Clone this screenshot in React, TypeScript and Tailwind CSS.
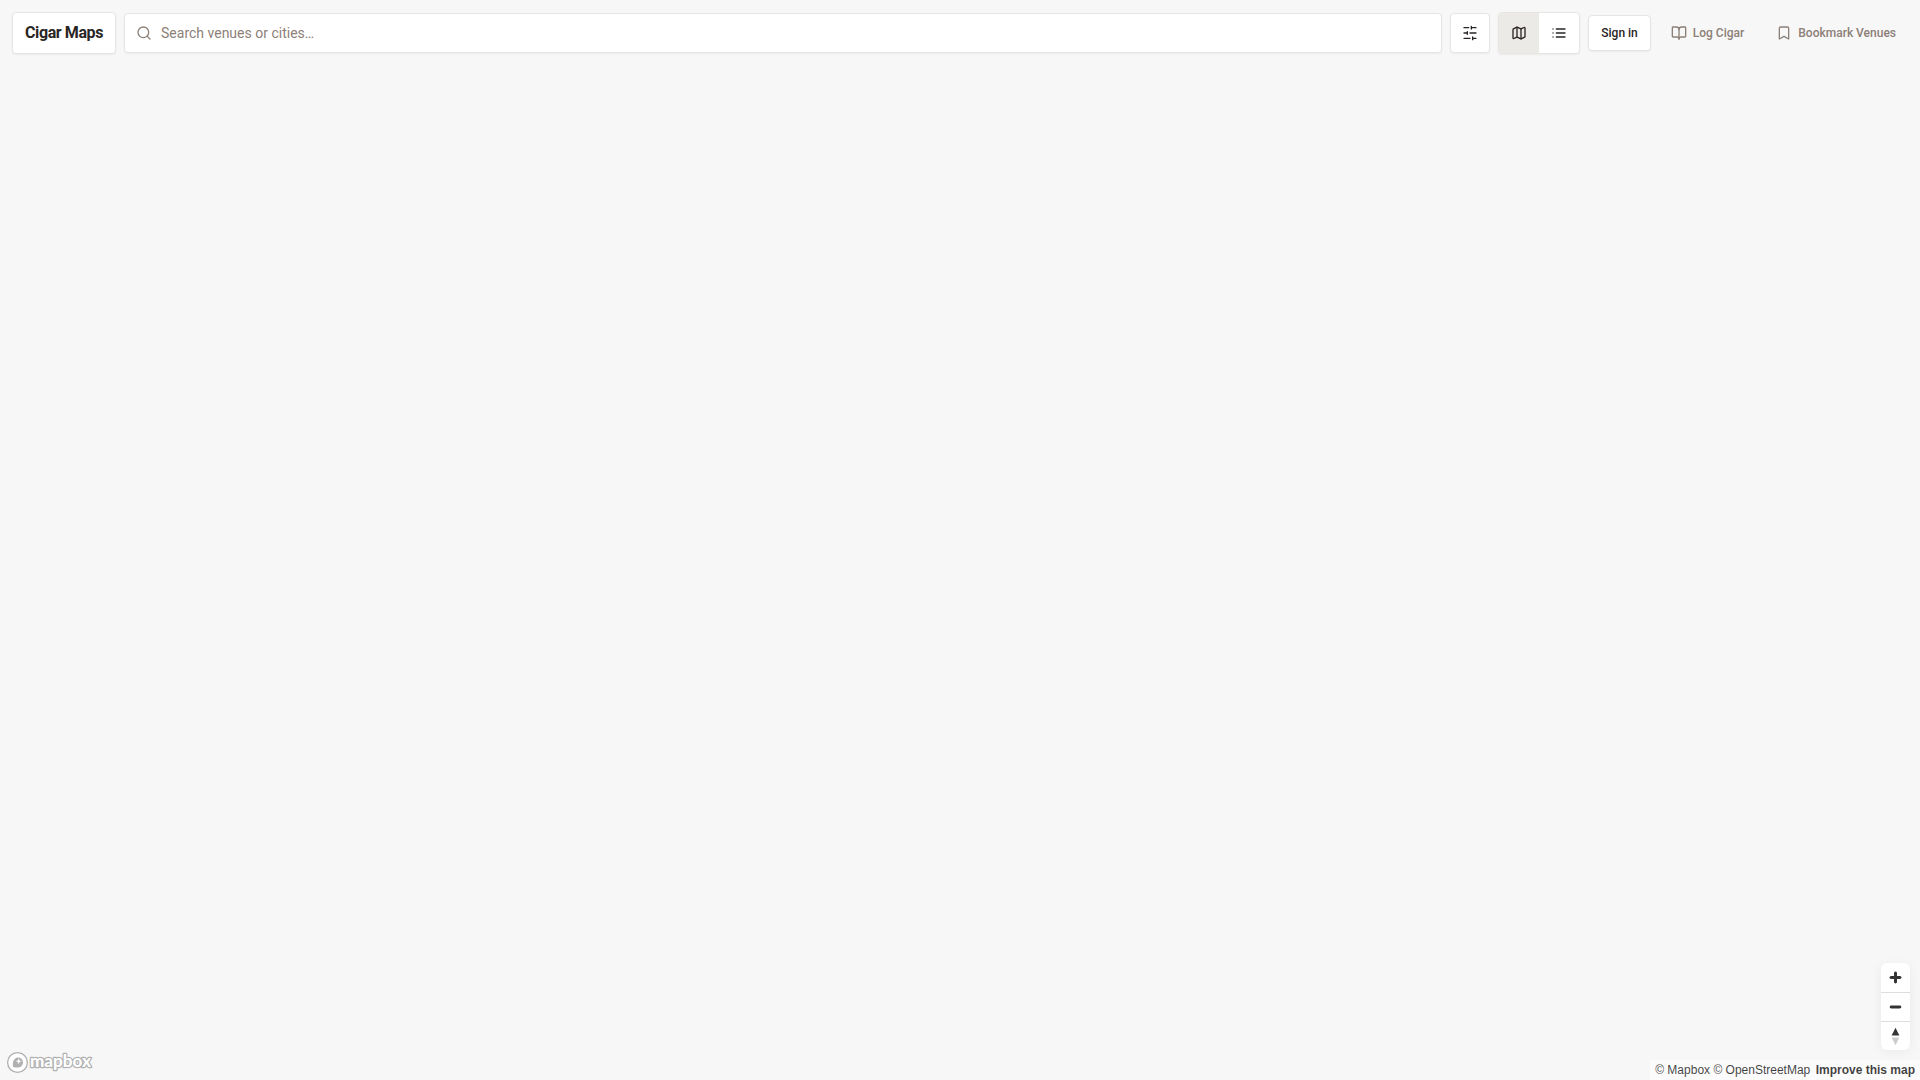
import { useState } from 'react';
import { BookOpen, Bookmark, Map as MapIcon, Search } from 'lucide-react';

type View = 'map' | 'list';

const panel = 'rounded border border-[#e7e5e2] bg-white shadow-xs';

function SlidersIcon() {
    return (
        <svg viewBox="0 0 24 24" fill="none" stroke="currentColor" strokeWidth="2" strokeLinecap="round" className="size-4">
            <path d="M21 4h-7M10 4H3M21 12h-9M8 12H3M21 20h-5M12 20H3M14 2v4M8 10v4M16 18v4" />
        </svg>
    );
}

function ListIcon() {
    return (
        <svg viewBox="0 0 24 24" fill="none" stroke="currentColor" strokeWidth="2" strokeLinecap="round" className="size-4">
            <path d="M8 6h13M8 12h13M8 18h13M3 6h.01M3 12h.01M3 18h.01" />
        </svg>
    );
}

/** Top bar: brand, search, filters, view toggle and account actions */
function Header() {
    const [view, setView] = useState<View>('map');
    const [query, setQuery] = useState('');

    return (
        <header className="flex items-center gap-2 p-3">
            <h1 className={`${panel} flex h-[42px] shrink-0 items-center px-3 text-base font-bold tracking-tight`}>
                Cigar Maps
            </h1>

            {/* Search */}
            <div className="relative flex-1">
                <Search className="absolute left-3 top-3 size-4 text-[#8c8078]" />
                <input
                    type="text"
                    aria-label="Search venues or cities"
                    value={query}
                    onChange={(e) => setQuery(e.target.value)}
                    placeholder="Search venues or cities…"
                    className={`${panel} block h-10 w-full pl-9 pr-3 text-sm placeholder:text-[#8c8078]`}
                />
            </div>

            <button type="button" aria-label="Filters" className={`${panel} flex size-10 items-center justify-center`}>
                <SlidersIcon />
            </button>

            {/* Map / list toggle */}
            <div className={`${panel} flex overflow-hidden`}>
                <button
                    type="button"
                    aria-label="Map view"
                    aria-pressed={view === 'map'}
                    onClick={() => setView('map')}
                    className="flex size-10 items-center justify-center aria-pressed:bg-[#ebeae6]"
                >
                    <MapIcon className="size-4" />
                </button>
                <button
                    type="button"
                    aria-label="List view"
                    aria-pressed={view === 'list'}
                    onClick={() => setView('list')}
                    className="flex size-10 items-center justify-center aria-pressed:bg-[#ebeae6]"
                >
                    <ListIcon />
                </button>
            </div>

            <button type="button" className={`${panel} h-9 px-3 text-xs font-medium`}>
                Sign in
            </button>
            <button type="button" className="flex h-9 items-center gap-1.5 px-3 text-xs font-medium text-[#8c8078]">
                <BookOpen className="size-4" />
                Log Cigar
            </button>
            <button type="button" className="flex h-9 items-center gap-1.5 px-3 text-xs font-medium text-[#8c8078]">
                <Bookmark className="size-4" />
                Bookmark Venues
            </button>
        </header>
    );
}

/** Zoom and compass buttons */
function MapControls() {
    return (
        <div className="mr-2.5 flex w-[29px] flex-col overflow-hidden rounded-md bg-white shadow-[0_2px_12px_rgba(0,0,0,0.06)]">
            <button type="button" aria-label="Zoom in" className="h-[29px]">
                <svg viewBox="0 0 29 29" fill="#333333" className="h-full w-full">
                    <path d="M14.5 8.5c-.75 0-1.5.75-1.5 1.5v3h-3c-.75 0-1.5.75-1.5 1.5S9.25 16 10 16h3v3c0 .75.75 1.5 1.5 1.5S16 19.75 16 19v-3h3c.75 0 1.5-.75 1.5-1.5S19.75 13 19 13h-3v-3c0-.75-.75-1.5-1.5-1.5z" />
                </svg>
            </button>
            <button type="button" aria-label="Zoom out" className="h-[29px] border-t border-[#dddddd]">
                <svg viewBox="0 0 29 29" fill="#333333" className="h-full w-full">
                    <path d="M10 13c-.75 0-1.5.75-1.5 1.5S9.25 16 10 16h9c.75 0 1.5-.75 1.5-1.5S19.75 13 19 13h-9z" />
                </svg>
            </button>
            <button type="button" aria-label="Reset bearing to north" className="h-[29px] border-t border-[#dddddd]">
                <svg viewBox="0 0 29 29" className="h-full w-full">
                    <path d="M10.5 14l4-8 4 8z" fill="#333333" />
                    <path d="M10.5 16l4 8 4-8z" fill="#cccccc" />
                </svg>
            </button>
        </div>
    );
}

function MapboxLogo() {
    return (
        <a href="#mapbox" aria-label="Mapbox logo" className="mb-1.5 ml-1.5">
            <svg width="88" height="23" viewBox="0 0 88 23">
                <circle cx="11.5" cy="11.5" r="9.9" fill="#ffffff" stroke="#b0b0b0" strokeWidth="1.3" />
                <path
                    d="M7 15.9c-.6-3.6 0-6.2 1.7-7.9a4.9 4.9 0 0 1 6.9 0 4.9 4.9 0 0 1 0 6.9c-2.6 2.6-8.6 1-8.6 1z"
                    fill="#b0b0b0"
                />
                <path d="M12.7 7.2l.8 2.3 2.3.8-2.3.8-.8 2.3-.8-2.3-2.3-.8 2.3-.8z" fill="#ffffff" />
                <text
                    x="24"
                    y="16"
                    fill="#ffffff"
                    stroke="#b0b0b0"
                    strokeWidth="2.4"
                    strokeLinejoin="round"
                    paintOrder="stroke"
                    className="font-[Lato,sans-serif] text-[17px] font-black"
                >
                    mapbox
                </text>
            </svg>
        </a>
    );
}

function Attribution() {
    return (
        <div className="h-5 bg-white/50 px-[5px] font-['Liberation_Sans',sans-serif] text-xs/5 text-black/75">
            <a href="#mapbox">© Mapbox</a> <a href="#osm">© OpenStreetMap</a>{' '}
            <a href="#improve" className="ml-0.5 font-bold">
                Improve this map
            </a>
        </div>
    );
}

export default function App() {
    return (
        <div className="flex min-h-screen flex-col justify-between bg-[#f7f7f7] font-[Roboto,sans-serif] text-[#292524]">
            <Header />
            <footer className="flex items-end justify-between">
                <MapboxLogo />
                <div className="flex flex-col items-end gap-2.5">
                    <MapControls />
                    <Attribution />
                </div>
            </footer>
        </div>
    );
}
